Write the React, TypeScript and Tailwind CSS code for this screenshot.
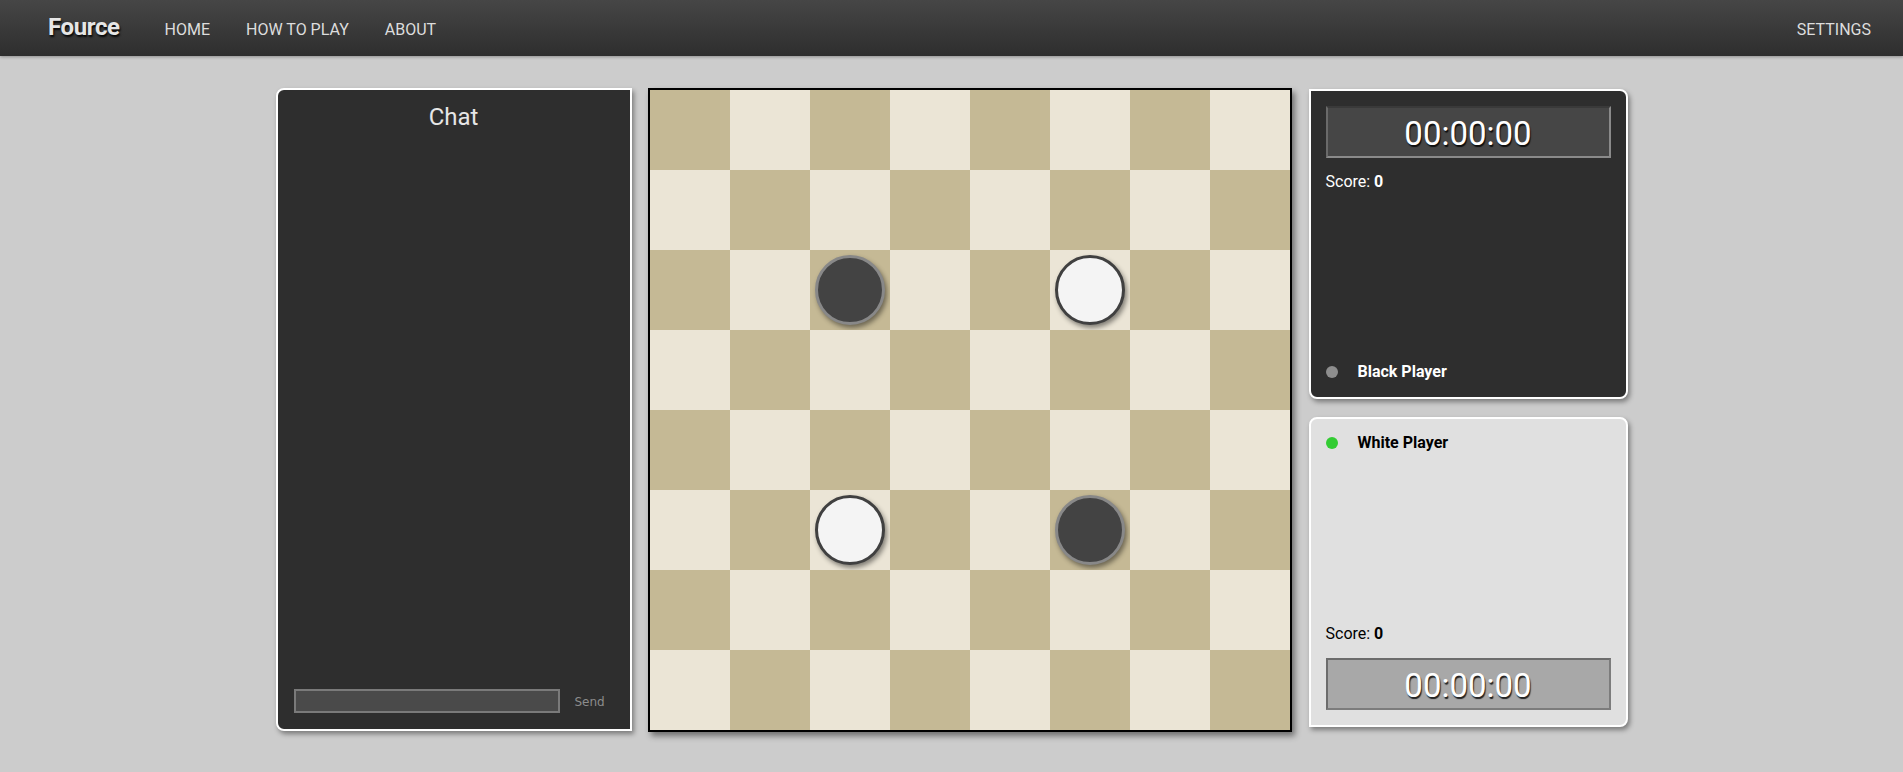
const pieces: Record<string, 'black' | 'white'> = {
  '2-2': 'black',
  '2-5': 'white',
  '5-2': 'white',
  '5-5': 'black',
};

function Piece({ color }: { color: 'black' | 'white' }) {
  if (color === 'black') {
    return <div className="w-[70px] h-[70px] rounded-full bg-[#434343] border-[3px] border-[#888888] shadow-[2px_3px_5px_rgba(0,0,0,0.45)]" />;
  }
  return <div className="w-[70px] h-[70px] rounded-full bg-[#f4f4f4] border-[3px] border-[#404040] shadow-[2px_3px_5px_rgba(0,0,0,0.45)]" />;
}

function Board() {
  const cells = [];
  for (let r = 0; r < 8; r++) {
    for (let c = 0; c < 8; c++) {
      const dark = (r + c) % 2 === 0;
      const p = pieces[`${r}-${c}`];
      cells.push(
        <div
          key={`${r}-${c}`}
          className={`w-[80px] h-[80px] flex items-center justify-center ${dark ? 'bg-[#c5b995]' : 'bg-[#ebe5d6]'}`}
        >
          {p && <Piece color={p} />}
        </div>
      );
    }
  }
  return (
    <div className="border-2 border-black shadow-[3px_4px_6px_rgba(0,0,0,0.45)] grid grid-cols-8 w-[644px] h-[644px] shrink-0">
      {cells}
    </div>
  );
}

function Timer({ light }: { light?: boolean }) {
  return (
    <div
      className={`h-[52px] w-full flex items-center justify-center border-2 text-[33px] pt-[3px] text-white [text-shadow:1px_2px_1px_rgba(0,0,0,0.8)] ${
        light
          ? 'bg-[#a8a8a8] border-t-[#6c6c6c] border-l-[#6c6c6c] border-r-[#7c7c7c] border-b-[#7c7c7c]'
          : 'bg-[#464646] border-t-[#3a3a3a] border-l-[#6a6a6a] border-r-[#8a8a8a] border-b-[#8a8a8a]'
      }`}
    >
      00:00:00
    </div>
  );
}

function App() {
  return (
    <div className="min-h-screen bg-[#cccccc] font-['Roboto',sans-serif]">
      <nav className="h-[56px] bg-gradient-to-b from-[#464646] to-[#2e2e2e] flex items-center pl-[48px] pr-[32px] shadow-[0_1px_3px_rgba(0,0,0,0.3)]">
        <span className="text-[24px] font-bold text-[#e6e6e6] [text-shadow:1px_2px_2px_rgba(0,0,0,0.9)] tracking-[-0.4px] mr-[45px] -mt-[2px]">
          Fource
        </span>
        <div className="flex items-center gap-[36px] text-[16px] text-[#dddddd] mt-[4px]">
          <span>HOME</span>
          <span>HOW TO PLAY</span>
          <span>ABOUT</span>
        </div>
        <span className="ml-auto text-[16px] text-[#dddddd] mt-[4px]">SETTINGS</span>
      </nav>

      <main className="flex justify-center items-start pt-[32px] gap-[16px]">
        <div className="w-[356px] h-[643px] bg-[#2e2e2e] border-2 border-white rounded-tl-lg rounded-bl-lg shadow-[2px_3px_5px_rgba(0,0,0,0.4)] flex flex-col px-[16px] pb-[16px]">
          <h2 className="text-center text-[24px] text-[#e6e6e6] pt-[9px]">Chat</h2>
          <div className="flex-1" />
          <div className="flex items-center">
            <div className="w-[266px] h-[24px] bg-[#4a4a4a] border-2 border-[#7a7a7a]" />
            <span className="ml-[15px] text-[12px] text-[#8c8c8c] font-['DejaVu_Sans',sans-serif] mt-[2px]">Send</span>
          </div>
        </div>

        <Board />

        <div className="flex flex-col gap-[18px] w-[319px] mt-px ml-px">
          <div className="h-[310px] bg-[#2e2e2e] border-2 border-white rounded-tr-lg rounded-br-lg rounded-bl-lg shadow-[2px_3px_5px_rgba(0,0,0,0.4)] p-[15px] pb-[13px] flex flex-col">
            <Timer />
            <p className="mt-[12px] text-[16px] text-white">
              Score: <b>0</b>
            </p>
            <div className="flex-1" />
            <div className="flex items-center">
              <span className="w-[12px] h-[12px] rounded-full bg-[#8e8e8e]" />
              <span className="ml-[20px] text-[16px] font-bold text-white">Black Player</span>
            </div>
          </div>

          <div className="h-[310px] bg-[#e0e0e0] border-2 border-white rounded-tl-lg rounded-tr-lg rounded-br-lg shadow-[2px_3px_5px_rgba(0,0,0,0.4)] pt-[12px] px-[15px] pb-[15px] flex flex-col">
            <div className="flex items-center">
              <span className="w-[12px] h-[12px] rounded-full bg-[#33cc33]" />
              <span className="ml-[20px] text-[16px] font-bold text-black">White Player</span>
            </div>
            <div className="flex-1" />
            <p className="mb-[12px] text-[16px] text-black">
              Score: <b>0</b>
            </p>
            <Timer light />
          </div>
        </div>
      </main>
    </div>
  );
}

export default App;
